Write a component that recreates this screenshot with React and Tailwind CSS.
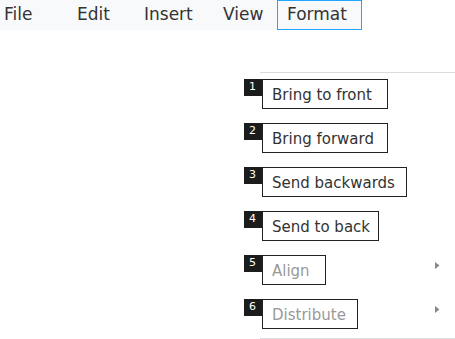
import React from 'react';

const menus = [
  { label: 'File', cls: 'w-[67px] pl-[4px]' },
  { label: 'Edit', cls: 'w-[67px] pl-[10px]' },
  { label: 'Insert', cls: 'w-[79px] pl-[10px]' },
  { label: 'View', cls: 'w-[64px] pl-[10px]' },
];

const items = [
  { n: 1, label: 'Bring to front', w: 'w-[126px]' },
  { n: 2, label: 'Bring forward', w: 'w-[126px]' },
  { n: 3, label: 'Send backwards', w: 'w-[145px]' },
  { n: 4, label: 'Send to back', w: 'w-[117px]' },
  { n: 5, label: 'Align', w: 'w-[64px]', disabled: true, sub: true },
  { n: 6, label: 'Distribute', w: 'w-[96px]', disabled: true, sub: true },
];

const App = () => {
  return (
    <div className="w-[455px] h-[339px] bg-white overflow-hidden" style={{ fontFamily: '"DejaVu Sans", sans-serif' }}>
      {/* Menubar */}
      <div className="flex w-[362px] h-[30px] bg-[#f8f9fa] text-[17px] text-[#333]">
        {menus.map(m => (
          <div key={m.label} className={`${m.cls} h-[30px] flex items-center`}>{m.label}</div>
        ))}
        <div className="w-[85px] h-[30px] border border-[#1ea7fd] pl-[9px] flex items-center">Format</div>
      </div>

      {/* Dropdown */}
      <div className="ml-[244px] mt-[42px]">
        <div className="ml-[16px] h-px bg-[#d9dbde]" />
        <div className="flex flex-col gap-[14px] pt-[6px] pb-[9px]">
          {items.map(it => (
            <div key={it.n} className="flex items-start">
              <div className="w-[18px] h-[17px] bg-[#1c1c1c] text-white text-[11px] leading-none pl-[5px] pt-[2px]">{it.n}</div>
              <div className={`${it.w} h-[30px] border border-[#222] pl-[9px] pt-[2px] flex items-center text-[15px] ${it.disabled ? 'text-[#999]' : 'text-[#333]'}`}>
                {it.label}
              </div>
              {it.sub && (
                <svg className="ml-auto mr-[15px] mt-[7px]" width="5" height="7" viewBox="0 0 5 7">
                  <path d="M0 0 L4.5 3.5 L0 7 Z" fill="#888" />
                </svg>
              )}
            </div>
          ))}
        </div>
        <div className="ml-[16px] h-px bg-[#d9dbde]" />
      </div>
    </div>
  );
};

export default App;
